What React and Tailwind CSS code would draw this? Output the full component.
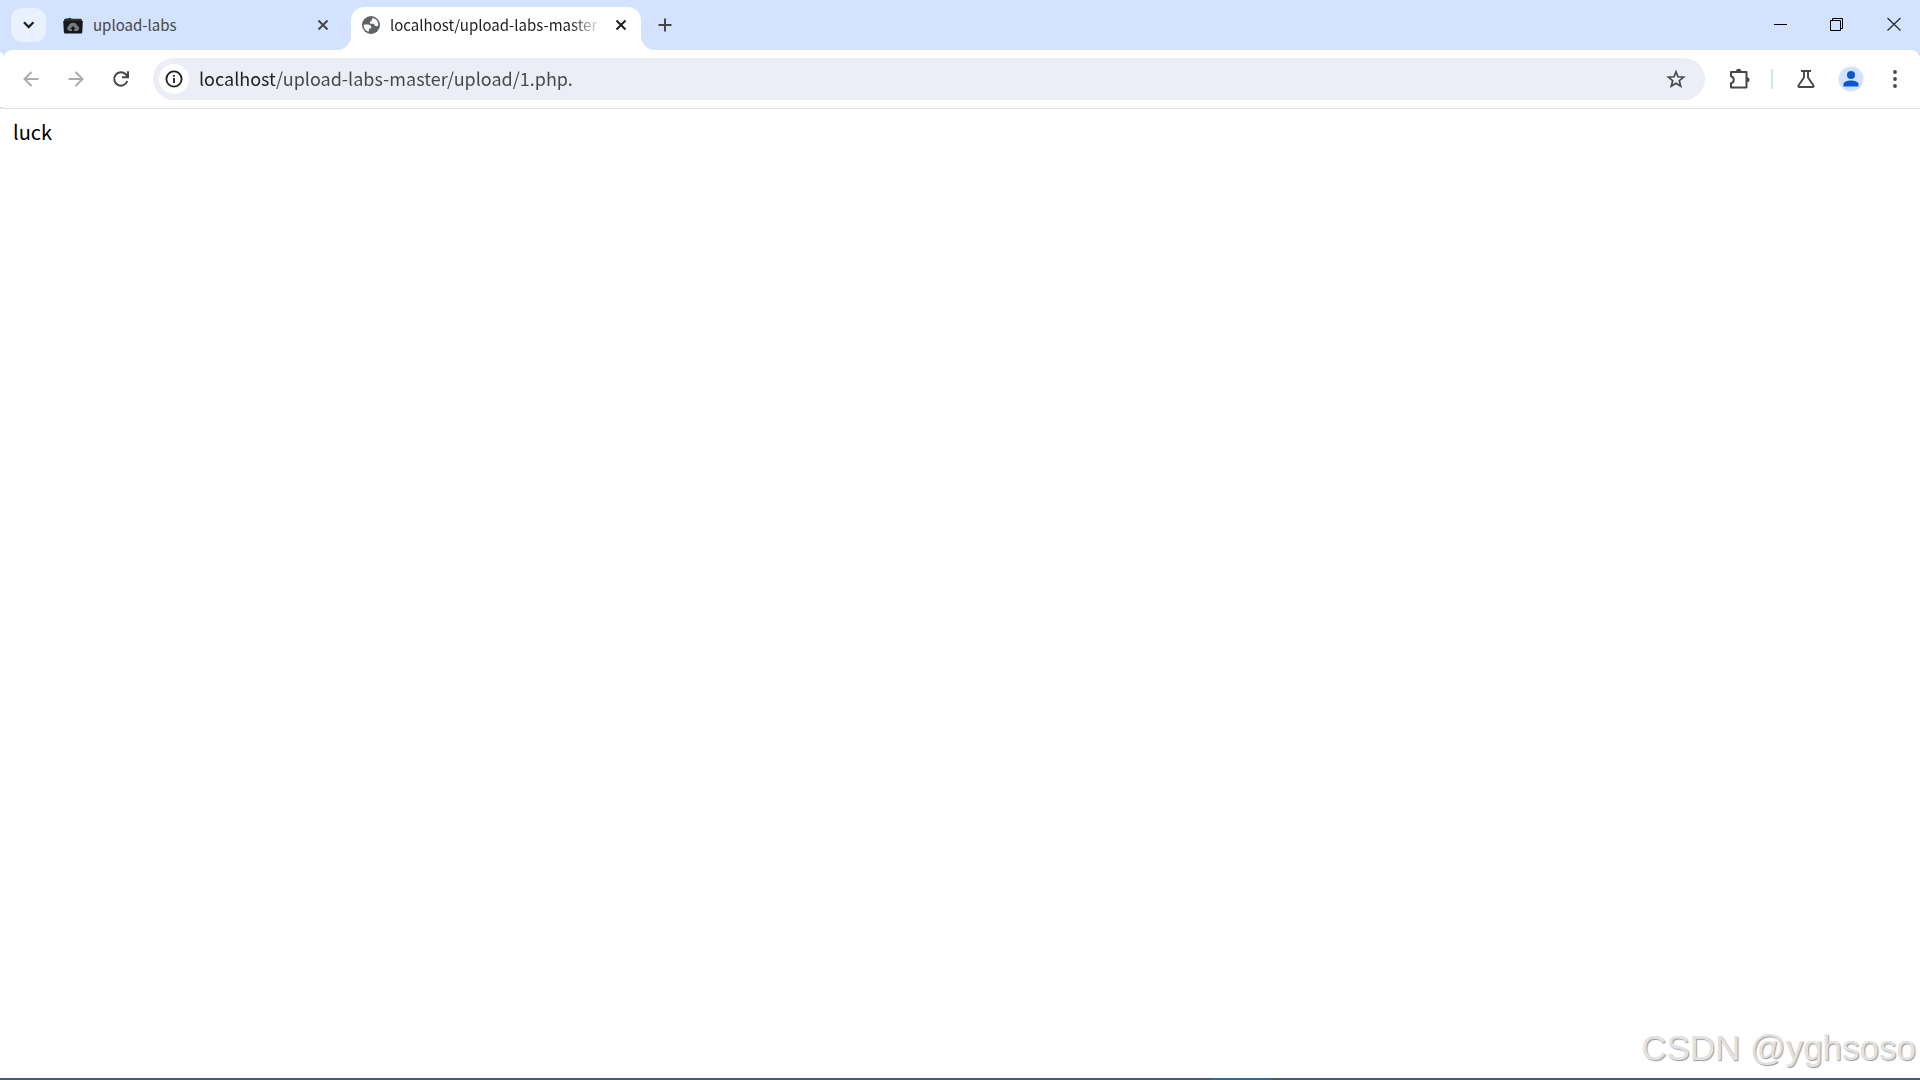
import React from 'react';

function Flare({side}) {
  return (
    <svg className={`absolute bottom-0 h-[14px] w-[14px] ${side === 'left' ? 'right-full' : 'left-full -scale-x-100'}`} viewBox="0 0 14 14">
      <path d="M14 0v14H0A14 14 0 0 0 14 0z" fill="#fff" />
    </svg>
  )
}

function CloseIcon({color}) {
  return (
    <svg className="h-5 w-5" viewBox="0 0 20 20" fill="none" stroke={color} strokeWidth="2">
      <path d="M5.500 5.500l9 9M14.500 5.500l-9 9" />
    </svg>
  )
}

function FolderIcon() {
  return (
    <svg className="h-5 w-5 shrink-0" viewBox="0 0 20 20">
      <path d="M1 5Q1 3.800 2.500 3.700L7.500 2.700l1 1h9.300q1.200 0 1.200 1.800V16H1z" fill="#2b2f30" />
      <path d="M.2 6h19.600l-.5 11Q19.200 18.500 18 18.500H2.200Q1 18.500.9 17z" fill="#15191a" />
      <path d="M6.500 16a2.700 2.700 0 0 1-1-5 4.700 4.700 0 0 1 8.900-.3 2.800 2.800 0 0 1-.4 5.300z" fill="#77797a" />
      <path d="M10 11l-2.800 3h1.800V16.800h2v-2.800h1.800z" fill="#15191a" />
    </svg>
  )
}

function GlobeIcon() {
  return (
    <svg className="h-[18px] w-[18px] shrink-0" viewBox="0 0 18 18">
      <circle cx="9" cy="9" r="9" fill="#5f6368" />
      <path d="M10.700 1.900A7.300 7.300 0 0 1 16.300 9.300c-.8 1-2.300 1.100-3.200.4-.8-.6-.7-1.700-2-1.900-1.300-.1-3 .3-3.200-1.100-.2-1.300 1-1.300 1.600-2 .8-.9.100-1.900 1.200-2.800z" fill="#fff" />
      <path d="M1.700 8.500h3.200c1.800 0 4.300.3 4.400 2.400 0 1-.5 1.500-1.300 1.700-.9.200-1.200.7-1.100 1.500.1.700-.1 1.400-.7 1.700A7.300 7.300 0 0 1 1.700 8.500z" fill="#fff" />
    </svg>
  )
}

function ToolButton({label, width, children}) {
  return (
    <button type="button" aria-label={label} className={`flex h-10 shrink-0 items-center justify-center ${width}`}>
      {children}
    </button>
  )
}

function TabStrip() {
  return (
    <div className="flex h-[50px] items-stretch bg-[#d3e2fd] text-[15px] leading-6">
      <button type="button" aria-label="Search tabs" className="ml-[11px] mt-2 flex h-[34px] w-[35px] items-center justify-center rounded-[11px] bg-[#e9f0fe]">
        <svg className="h-5 w-5" viewBox="0 0 20 20" fill="none" stroke="#1f1f1f" strokeWidth="2.300">
          <path d="M5 7.300L9.700 12l4.700-4.700" />
        </svg>
      </button>

      <div className="flex w-[305px] items-center pl-[17px] pr-[18px]">
        <FolderIcon />
        <span className="ml-[10px] flex-1 text-[#474747]">upload-labs</span>
        <button type="button" aria-label="Close tab upload-labs">
          <CloseIcon color="#474747" />
        </button>
      </div>

      <div className="relative mt-[7px] flex w-[290px] items-center rounded-t-[13px] bg-white pb-[7px] pl-[11px] pr-[10px]">
        <Flare side="left" />
        <Flare side="right" />
        <GlobeIcon />
        <span className="ml-[10px] w-[212px] whitespace-nowrap text-[#1f1f1f] [mask-image:linear-gradient(to_right,#000_180px,transparent_212px)]">localhost/upload-labs-master</span>
        <button type="button" aria-label="Close tab localhost" className="ml-auto">
          <CloseIcon color="#1f1f1f" />
        </button>
      </div>

      <button type="button" aria-label="New tab" className="ml-[14px]">
        <svg className="h-5 w-5" viewBox="0 0 20 20" fill="none" stroke="#474747" strokeWidth="2">
          <path d="M10 3.500v13M3.500 10h13" />
        </svg>
      </button>

      <div className="ml-auto flex">
        <ToolButton label="Minimize" width="mt-1 w-14">
          <svg className="h-[14px] w-[14px]" viewBox="0 0 14 14"><path d="M1 7h13v1H1z" fill="#000" /></svg>
        </ToolButton>
        <ToolButton label="Restore" width="mt-1 w-14">
          <svg className="h-[14px] w-[14px]" viewBox="0 0 14 14" fill="none" stroke="#000">
            <path d="M1.500 3.500h10v10h-10zM3.500 3.500v-2h10v10h-2" />
          </svg>
        </ToolButton>
        <ToolButton label="Close" width="mt-1 w-14 pl-1">
          <svg className="h-[14px] w-[14px]" viewBox="0 0 14 14" fill="none" stroke="#222" strokeWidth="1.100">
            <path d="M.5 1l13 12.500M13.500 1l-13 12.500" />
          </svg>
        </ToolButton>
      </div>
    </div>
  )
}

function Toolbar() {
  return (
    <div className="flex bg-[#d3e2fd]">
      <div className="mb-px mt-[2px] w-[3px] rounded-tr-[3px] border-b border-[#dfe0e2] bg-white" />
      <div className="flex h-[59px] flex-1 items-center rounded-t-[9px] border-b border-[#dfe0e2] bg-white pl-[5px]">
        <ToolButton label="Back" width="w-[45px]">
          <svg className="h-[18px] w-[18px]" viewBox="0 0 18 18" fill="none" stroke="#ababab" strokeWidth="2">
            <path d="M16.500 9H3M9.500 2l-7 7 7 7" />
          </svg>
        </ToolButton>
        <ToolButton label="Forward" width="w-[45px]">
          <svg className="h-[18px] w-[18px]" viewBox="0 0 18 18" fill="none" stroke="#ababab" strokeWidth="2">
            <path d="M1.500 9H15M8.500 2l7 7-7 7" />
          </svg>
        </ToolButton>
        <ToolButton label="Reload" width="w-[45px]">
          <svg className="h-[18px] w-[18px]" viewBox="0 0 18 18" fill="none" stroke="#474747" strokeWidth="2">
            <path d="M15.300 11A6.700 6.700 0 1 1 13.800 4.300L16 6.700M16 1.300v6h-6" />
          </svg>
        </ToolButton>

        <form className="ml-[10px] flex h-[42px] flex-1 items-center rounded-full bg-[#ebeef7] pl-[6px] pr-[19px]">
          <button type="button" aria-label="View site information" className="flex h-[30px] w-[30px] items-center justify-center rounded-full bg-white">
            <svg className="h-[18px] w-[18px]" viewBox="0 0 18 18" fill="none" stroke="#1f1f1f" strokeWidth="1.800">
              <circle cx="9" cy="9" r="7.600" />
              <path d="M9 8v5M9 5v1.800" />
            </svg>
          </button>
          {/* host part is darker than the path */}
          <input
            type="text"
            aria-label="Address"
            defaultValue="localhost/upload-labs-master/upload/1.php."
            className="mb-[2px] ml-[10px] h-8 min-w-0 flex-1 bg-[linear-gradient(to_right,#1f1f1f_76px,#474747_76px)] bg-clip-text text-lg text-transparent caret-black outline-none"
          />
          <button type="button" aria-label="Bookmark this tab">
            <svg className="h-5 w-5" viewBox="0 0 20 20" fill="none" stroke="#474747" strokeWidth="1.700">
              <path d="M10 2.800l2 5 5.600.4-4.300 3.500 1.400 5.400L10 14.200l-4.700 2.900 1.400-5.400-4.300-3.500L8 7.800z" />
            </svg>
          </button>
        </form>

        <ToolButton label="Extensions" width="ml-[12px] w-11">
          <svg className="h-[22px] w-[22px]" viewBox="0 0 22 22" fill="none" stroke="#474747" strokeWidth="2">
            <path d="M3 4h15.500v15.500H3v-4.200c3.700-1 3.700-6.100 0-7.100z" strokeLinejoin="round" />
            <path d="M8 3.500a2.700 2.700 0 0 1 5.400 0zM19 9.300a2.500 2.500 0 0 1 0 5z" fill="#474747" stroke="none" />
          </svg>
        </ToolButton>
        <div className="ml-[10px] h-5 w-[2px] bg-[#d3e2fd]" />
        <ToolButton label="Labs" width="ml-[11px] w-11">
          <svg className="h-5 w-5" viewBox="0 0 20 20" fill="none" stroke="#474747" strokeWidth="1.900">
            <path d="M5 2h10M8 2v6.500L2.500 16.500q-.6 1.500 1 1.500h13q1.600 0 1-1.500L12 8.500V2" />
          </svg>
        </ToolButton>
        <ToolButton label="Profile" width="w-[45px]">
          <svg className="h-[26px] w-[26px]" viewBox="0 0 26 26">
            <circle cx="13" cy="13" r="12.500" fill="#d3e2fd" />
            <circle cx="13" cy="9" r="4" fill="#0b57d0" />
            <path d="M5.500 20.500v-2.200c0-5 15-5 15 0v2.200z" fill="#0b57d0" />
          </svg>
        </ToolButton>
        <ToolButton label="Menu" width="mr-[3px] w-11">
          <svg className="h-5 w-5" viewBox="0 0 20 20" fill="#474747">
            <circle cx="10" cy="3" r="1.900" />
            <circle cx="10" cy="10" r="1.900" />
            <circle cx="10" cy="17" r="1.900" />
          </svg>
        </ToolButton>
      </div>
    </div>
  )
}

export default function App() {
  return (
    <div className="relative flex min-h-screen flex-col overflow-hidden bg-white font-['Noto_Sans_CJK_SC',sans-serif]">
      <TabStrip />
      <Toolbar />
      <main className="flex-1 px-[13px] py-[7px]">
        <p className="text-[20px] leading-8 text-black">luck</p>
      </main>
      <div className="absolute bottom-[10px] right-1 whitespace-nowrap font-['Liberation_Sans',sans-serif] text-[35px] leading-[44px] text-[#e2e2e2] [text-shadow:1px_1px_1px_#999]">CSDN @yghsoso</div>
      <footer className="flex h-[2px] bg-[#3f5d70]">
        <div className="ml-[63%] w-[61px] bg-[#2d6d94]" />
      </footer>
    </div>
  )
}
